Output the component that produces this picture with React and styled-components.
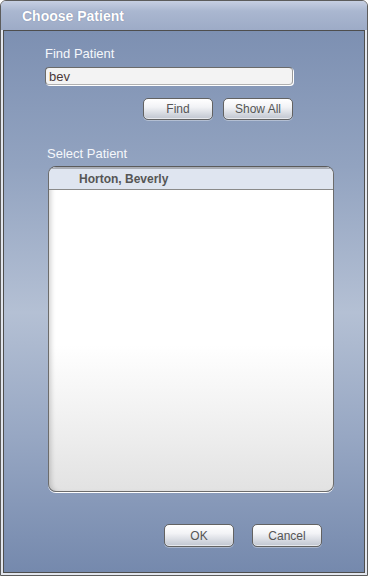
import React, { useState } from "react";
import styled, { createGlobalStyle } from "styled-components";

const GlobalStyle = createGlobalStyle`
  html, body {
    margin: 0;
    padding: 0;
    background: #ffffff;
  }
  body {
    font-family: "Liberation Sans", Arial, sans-serif;
  }
`;

const Window = styled.div`
  width: 368px;
  height: 576px;
  box-sizing: border-box;
  border: 1px solid #5c5c5c;
  border-radius: 6px 6px 0 0;
  background: #e2e6ee;
  display: flex;
  flex-direction: column;
  overflow: hidden;
`;

const TitleBar = styled.div`
  height: 29px;
  flex: none;
  display: flex;
  align-items: center;
  padding-left: 21px;
  background: linear-gradient(to bottom, #c6cfe2 0%, #aab7d0 35%, #9dabc7 100%);
  color: #ffffff;
  font-weight: bold;
  font-size: 14px;
  text-shadow: 0 0 1px rgba(70, 85, 120, 0.6);
`;

const Panel = styled.div`
  flex: 1;
  margin: 0 2px 2px;
  border: 1px solid #4e4e4e;
  background: linear-gradient(
    to bottom,
    #7d90b2 0%,
    #92a3c0 25%,
    #b4c0d4 52%,
    #97a7c3 75%,
    #7589ad 100%
  );
  display: flex;
  flex-direction: column;
  padding: 15px 42px 0 41px;
`;

const Label = styled.div`
  color: #f5f7fb;
  font-size: 13px;
  line-height: 15px;
  margin-top: ${(p) => p.$top || 0}px;
  margin-left: ${(p) => p.$indent || 0}px;
`;

const FieldGroup = styled.div`
  width: 248px;
  display: flex;
  flex-direction: column;
`;

const TextInput = styled.input`
  box-sizing: border-box;
  height: 18px;
  margin-top: 6px;
  width: 100%;
  border: 1px solid #6a6a6a;
  border-right-color: #9a9a9a;
  border-bottom-color: #b0b0b0;
  border-radius: 4px;
  background: #f3f3f3;
  box-shadow: 1px 1px 0 #ffffff;
  padding: 0 3px;
  font-family: "Liberation Sans", Arial, sans-serif;
  font-size: 13px;
  color: #4a3a3a;
  outline: none;
`;

const ButtonRow = styled.div`
  display: flex;
  justify-content: flex-end;
  gap: ${(p) => p.$gap || 10}px;
  margin-top: ${(p) => p.$top}px;
`;

const Button = styled.button`
  width: 70px;
  height: ${(p) => p.$h || 22}px;
  box-sizing: border-box;
  border: 1px solid #626262;
  border-radius: 5px;
  background: linear-gradient(to bottom, #ffffff 0%, #f2f3f6 40%, #d0d4dc 80%, #c0c5d0 100%);
  box-shadow: inset 0 -1px 0 rgba(255, 255, 255, 0.6), 0 1px 0 rgba(255, 255, 255, 0.35);
  font-family: "Liberation Sans", Arial, sans-serif;
  font-size: 12px;
  color: #555555;
  padding: 0;
  cursor: pointer;
`;

const List = styled.div`
  margin-top: 5px;
  margin-left: 3px;
  width: 286px;
  height: 326px;
  box-sizing: border-box;
  border: 1px solid #6c6c6c;
  border-top-color: #5a5a5a;
  border-radius: 8px;
  overflow: hidden;
  background: linear-gradient(to bottom, #ffffff 0%, #ffffff 55%, #ececec 85%, #e2e2e2 100%);
  box-shadow: inset 5px 0 5px -3px rgba(0, 0, 0, 0.18), 0 1px 0 #ffffff;
  display: flex;
  flex-direction: column;
`;

const Row = styled.div`
  height: 23px;
  flex: none;
  box-sizing: border-box;
  display: flex;
  align-items: center;
  padding-left: 30px;
  background: ${(p) => (p.$selected ? "#dfe5f0" : "transparent")};
  border-top: 2px solid ${(p) => (p.$selected ? "#a9adb5" : "transparent")};
  border-bottom: 1px solid #8a8a8a;
  color: #555555;
  font-weight: bold;
  font-size: 12px;
  cursor: default;
`;

const patients = ["Horton, Beverly"];

export default function App() {
  const [query, setQuery] = useState("bev");
  const [selected, setSelected] = useState(0);

  return (
    <>
      <GlobalStyle />
      <Window>
        <TitleBar>Choose Patient</TitleBar>
        <Panel>
          <FieldGroup>
            <Label>Find Patient</Label>
            <TextInput value={query} onChange={(e) => setQuery(e.target.value)} />
            <ButtonRow $top={13}>
              <Button>Find</Button>
              <Button>Show All</Button>
            </ButtonRow>
          </FieldGroup>
          <Label $top={26} $indent={2}>Select Patient</Label>
          <List>
            {patients.map((name, i) => (
              <Row key={name} $selected={selected === i} onClick={() => setSelected(i)}>
                {name}
              </Row>
            ))}
          </List>
          <ButtonRow $top={32} $gap={18}>
            <Button $h={23}>OK</Button>
            <Button $h={23}>Cancel</Button>
          </ButtonRow>
        </Panel>
      </Window>
    </>
  );
}
